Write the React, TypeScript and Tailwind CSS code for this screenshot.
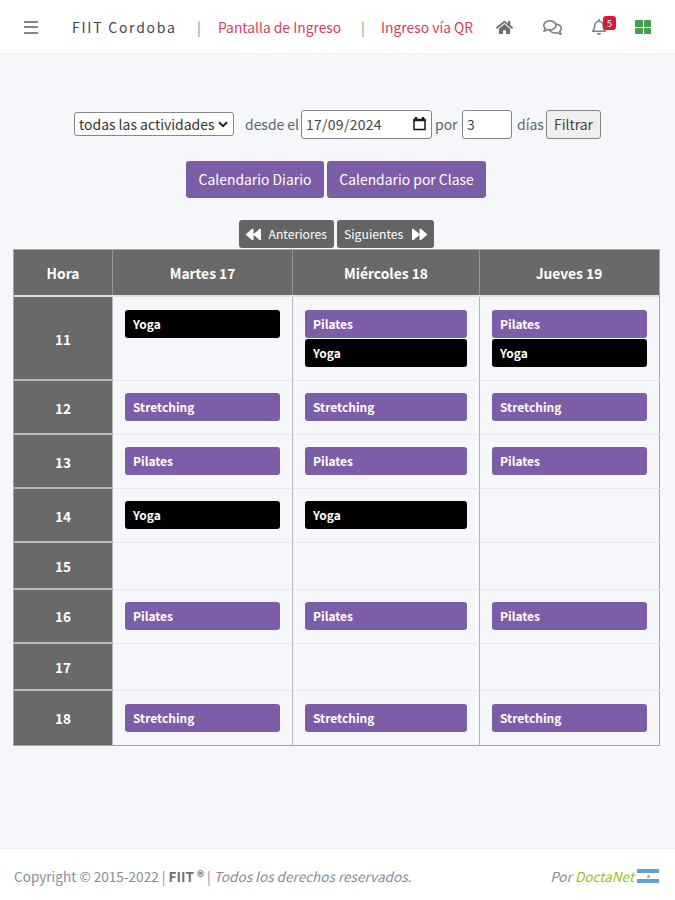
import React from "react";
import {
  FaBackward,
  FaForward,
  FaHome,
  FaRegBell,
  FaRegComments,
} from "react-icons/fa";

type Activity = "Yoga" | "Pilates" | "Stretching";
type Row = { hour: string; height: string; days: Activity[][] };

const rows: Row[] = [
  { hour: "11", height: "h-[84px]", days: [["Yoga"], ["Pilates", "Yoga"], ["Pilates", "Yoga"]] },
  { hour: "12", height: "h-[54px]", days: [["Stretching"], ["Stretching"], ["Stretching"]] },
  { hour: "13", height: "h-[54px]", days: [["Pilates"], ["Pilates"], ["Pilates"]] },
  { hour: "14", height: "h-[54px]", days: [["Yoga"], ["Yoga"], []] },
  { hour: "15", height: "h-[47px]", days: [[], [], []] },
  { hour: "16", height: "h-[54px]", days: [["Pilates"], ["Pilates"], ["Pilates"]] },
  { hour: "17", height: "h-[47px]", days: [[], [], []] },
  { hour: "18", height: "h-[54px]", days: [["Stretching"], ["Stretching"], ["Stretching"]] },
];

const columns = "grid grid-cols-[99px_180px_187px_180px]";

function Chip({ name }: { name: Activity }) {
  return (
    <div
      className={`flex h-7 shrink-0 items-center rounded-[3px] pl-2 text-[12px] font-bold leading-none text-white ${
        name === "Yoga" ? "bg-black" : "bg-[#7b5ea7]"
      }`}
    >
      {name}
    </div>
  );
}

function Header() {
  return (
    <header className="flex h-[54px] items-center whitespace-nowrap border-b border-[#eff1f4] bg-white pt-px text-[13.85px] leading-5">
      <span className="ml-[24px] flex h-[13px] w-[14px] flex-col justify-between">
        <span className="h-[2px] bg-[#858585]" />
        <span className="h-[2px] bg-[#858585]" />
        <span className="h-[2px] bg-[#858585]" />
      </span>
      <span className="ml-[34px] w-[105px] text-[14px] tracking-[1.75px] text-[#3f4650]">FIIT Cordoba</span>
      <span className="ml-[20px] w-2 text-[#888]">|</span>
      <a className="ml-[13px] w-[123px] text-[#dc3b59]">Pantalla de Ingreso</a>
      <span className="ml-[20px] w-2 text-[#888]">|</span>
      <a className="ml-[12px] w-[93px] text-[#dc3b59]">Ingreso vía QR</a>
      <FaHome className="ml-[22px] size-[17px] text-[#707070]" />
      <FaRegComments className="ml-[30px] size-[19px] text-[#808080]" />
      <span className="relative ml-[29px]">
        <FaRegBell className="size-4 text-[#808080]" />
        <span className="absolute -top-[3px] left-3 flex h-[14px] w-[13px] items-center justify-center rounded-[3px] bg-[#dc1736] text-[9px] leading-none text-white">
          5
        </span>
      </span>
      <span className="ml-[28px] grid h-[14px] w-4 grid-cols-2 gap-[1px]">
        {[0, 1, 2, 3].map((i) => (
          <span key={i} className="rounded-[1px] bg-[#43a047]" />
        ))}
      </span>
    </header>
  );
}

function Filters() {
  return (
    <div className="flex h-[30px] items-center whitespace-nowrap pl-[74px] text-[13.95px] leading-5 text-[#5d646b]">
      <div className="flex h-6 w-[160px] items-center justify-between rounded-[3px] border border-[#858585] bg-white pl-1 pr-[5px] text-[#333]">
        <span>todas las actividades</span>
        <svg viewBox="0 0 10 7" className="h-[7px] w-[10px]" fill="none" stroke="#222" strokeWidth="2">
          <path d="M1 1.2 5 5.2 9 1.2" />
        </svg>
      </div>
      <span className="ml-[11px] w-[54px]">desde el</span>
      <div className="ml-[2px] flex h-[29px] w-[131px] items-center justify-between rounded-[3px] border border-[#858585] bg-white pl-1 pr-[5px] text-[#444]">
        <span className="tracking-[0.3px]">17/09/2024</span>
        <svg viewBox="0 0 13 14" className="h-[14px] w-[13px]" fill="none" stroke="#171717">
          <path d="M1 3v9.4h11V3" strokeWidth="1.5" />
          <path d="M.3 3h12.4M3 0v2M10 0v2" strokeWidth="2.5" />
        </svg>
      </div>
      <span className="ml-[3px] w-[24px]">por</span>
      <div className="ml-[3px] flex h-[29px] w-[50px] items-center rounded-[3px] border border-[#858585] bg-white pl-1 text-[#444]">
        3
      </div>
      <span className="ml-[5px] w-[27px]">días</span>
      <button className="ml-[2px] h-[29px] w-[55px] rounded-[3px] border border-[#858585] bg-[#efefef] text-[#444]">
        Filtrar
      </button>
    </div>
  );
}

function Calendar() {
  return (
    <div className="ml-[13px] w-[647px] border border-[#a5a7aa] text-white">
      <div className={`${columns} h-[47px] border-b-2 border-[#dfe2e5] bg-[#696969] text-[13.8px] font-bold leading-none`}>
        {["Hora", "Martes 17", "Miércoles 18", "Jueves 19"].map((h, i) => (
          <div
            key={h}
            className={`flex items-center justify-center pt-[2px] ${i < 3 ? "border-r border-[#929496]" : ""} ${
              i === 3 ? "pr-[2px]" : ""
            }`}
          >
            {h}
          </div>
        ))}
      </div>
      {rows.map((row, r) => {
        const last = r === rows.length - 1;
        return (
          <div key={row.hour} className={`${columns} ${row.height}`}>
            <div
              className={`flex items-center justify-center border-r border-[#b5b7b9] bg-[#696969] text-[13.6px] font-bold leading-none ${
                last ? "pt-px" : "border-b-2"
              } ${!last && r < 4 ? "pt-1" : ""} ${!last && r >= 4 ? "pt-[2px]" : ""}`}
            >
              {row.hour}
            </div>
            {row.days.map((day, d) => (
              <div
                key={d}
                className={`flex flex-col gap-px pl-3 ${r === 0 || last ? "pt-[13px]" : "pt-3"} ${
                  last ? "" : "border-b border-b-[#e6eaee]"
                } ${d < 2 ? "border-r border-r-[#b2b4b8] pr-3" : "pr-[13px]"}`}
              >
                {day.map((a) => (
                  <Chip key={a} name={a} />
                ))}
              </div>
            ))}
          </div>
        );
      })}
    </div>
  );
}

export default function App() {
  return (
    <div className="flex h-[900px] w-[675px] flex-col overflow-hidden bg-[#f5f7fb] font-['Noto_Sans_CJK_JP','Open_Sans',sans-serif]">
      <Header />
      <main className="flex-1 pt-[55px]">
        <Filters />
        <div className="mt-[22px] flex gap-[3px] pl-[186px] text-[13.9px] leading-5 text-white">
          <button className="h-[37px] w-[138px] whitespace-nowrap rounded-[3px] bg-[#7b5ea7] pb-px">Calendario Diario</button>
          <button className="h-[37px] w-[159px] whitespace-nowrap rounded-[3px] bg-[#7b5ea7] pb-px">Calendario por Clase</button>
        </div>
        <div className="mt-[22px] flex gap-[3px] pb-px pl-[239px] text-[12.2px] leading-none text-white">
          <button className="flex h-7 w-[95px] items-center justify-between rounded-[3px] bg-[#646464] px-[7px]">
            <FaBackward className="size-[15px]" />
            Anteriores
          </button>
          <button className="flex h-7 w-[97px] items-center justify-between rounded-[3px] bg-[#646464] px-[7px]">
            Siguientes
            <FaForward className="size-[15px]" />
          </button>
        </div>
        <Calendar />
      </main>
      <footer className="flex h-[52px] items-center whitespace-nowrap border-t border-[#e9ebee] bg-white pb-px pt-[4px] pl-[14px] text-[13.58px] leading-5 text-[#868e96]">
        <span>
          Copyright © 2015-2022 | <b className="text-[#6b7279]">FIIT ®</b> | <i>Todos los derechos reservados.</i>
        </span>
        <i className="ml-auto">
          Por <span className="text-[#97c31f]">DoctaNet</span>
        </i>
        <span className="ml-[3px] mr-4 flex h-[14px] w-[22px] flex-col justify-between">
          <span className="h-1 bg-[#669fd3]" />
          <span className="size-[3px] self-center rounded-full bg-[#d79a55]" />
          <span className="h-1 bg-[#669fd3]" />
        </span>
      </footer>
    </div>
  );
}
